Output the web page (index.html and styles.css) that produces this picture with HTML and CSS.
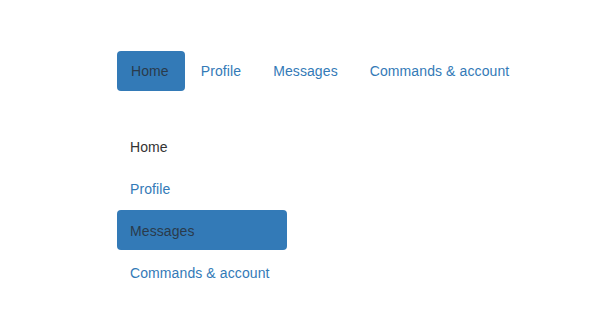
FILE: index.html
```html
<!DOCTYPE html>
<html lang="en">
<head>
    <meta charset="UTF-8">
    <title>Pills</title>
    <link rel="stylesheet" href="styles.css">
</head>
<body>
    <div class="container">
        <!-- Horizontal pills -->
        <ul class="nav-pills">
            <li class="active"><a href="#">Home</a></li>
            <li><a href="#">Profile</a></li>
            <li><a href="#">Messages</a></li>
            <li><a href="#">Commands &amp; account</a></li>
        </ul>

        <!-- Stacked pills -->
        <ul class="nav-pills stacked">
            <li class="current"><a href="#">Home</a></li>
            <li><a href="#">Profile</a></li>
            <li class="active"><a href="#">Messages</a></li>
            <li><a href="#">Commands &amp; account</a></li>
        </ul>
    </div>
</body>
</html>
```

FILE: styles.css
```css
body {
    margin: 0;
    font-family: "Liberation Sans", Arial, sans-serif;
    font-size: 14px;
    line-height: 20px;
    letter-spacing: 0.1px;
    background-color: #fff;
    color: #333;
}

.container {
    padding: 51px 0 0 117px;
}

.nav-pills {
    list-style: none;
    margin: 0;
    padding: 0;
    display: flex;
}

.nav-pills li + li {
    margin-left: 2px;
}

.nav-pills a {
    display: block;
    padding: 10px 16px 10px 14px;
    border-radius: 4px;
    color: #337ab7;
    text-decoration: none;
}

.nav-pills .active a {
    background-color: #337ab7;
    color: #2a3b4c;
}

.nav-pills .current a {
    color: #333;
}

.stacked {
    flex-direction: column;
    width: 170px;
    margin-top: 35px;
}

.stacked li + li {
    margin-left: 0;
    margin-top: 2px;
}

.stacked a {
    padding: 11px 15px 9px 13px;
}
```
